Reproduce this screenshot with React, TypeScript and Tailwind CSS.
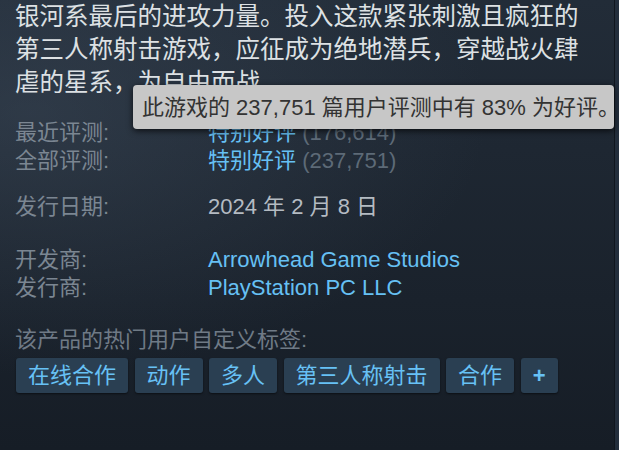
import React from "react";

const font = { fontFamily: '"Liberation Sans", "Noto Sans CJK SC", sans-serif' };

const tags = ["在线合作", "动作", "多人", "第三人称射击", "合作"];

function InfoRow({ label, children }: { label: string; children: React.ReactNode }) {
  return (
    <div className="flex leading-[28px]">
      <div className="w-[193px] shrink-0 text-[#7b8692]">{label}</div>
      <div>{children}</div>
    </div>
  );
}

export default function App() {
  return (
    <div
      className="relative flex h-[450px] w-[619px] overflow-hidden bg-[radial-gradient(ellipse_at_5%_25%,rgba(75,90,108,0.35),transparent_55%),linear-gradient(to_bottom,#222c38,#161d26)]"
      style={font}
    >
      <div className="flex-1 pl-[15px]">
        {/* Description */}
        <p className="w-[572px] text-[24.5px] leading-[33px] text-[#dde1e4]">
          银河系最后的进攻力量。投入这款紧张刺激且疯狂的第三人称射击游戏，应征成为绝地潜兵，穿越战火肆虐的星系，为自由而战。
        </p>

        <div className="mt-[20px] text-[22px]">
          <InfoRow label="最近评测:">
            <span className="text-[#66c0f4]">特别好评</span>
            <span className="text-[#5d6a77]"> (176,614)</span>
          </InfoRow>
          <InfoRow label="全部评测:">
            <span className="text-[#66c0f4]">特别好评</span>
            <span className="text-[#5d6a77]"> (237,751)</span>
          </InfoRow>

          <div className="mt-[18px]">
            <InfoRow label="发行日期:">
              <span className="text-[#b4bbc2]">2024 年 2 月 8 日</span>
            </InfoRow>
          </div>

          <div className="mt-[25px]">
            <InfoRow label="开发商:">
              <span className="text-[#66c0f4]">Arrowhead Game Studios</span>
            </InfoRow>
            <InfoRow label="发行商:">
              <span className="text-[#66c0f4]">PlayStation PC LLC</span>
            </InfoRow>
          </div>

          <div className="mt-[24px] leading-[28px] text-[#6f7a86]">该产品的热门用户自定义标签:</div>

          {/* Tags */}
          <div className="ml-px mt-[4px] flex gap-[6.5px]">
            {tags.map((t) => (
              <div
                key={t}
                className="flex h-[35px] items-center rounded-[3px] bg-[#2a3f52] px-[12px] text-[22px] text-[#67c1f5] shadow-[0_1px_2px_rgba(0,0,0,0.5)]"
              >
                {t}
              </div>
            ))}
            <div className="flex h-[35px] w-[37px] items-center justify-center rounded-[3px] bg-[#2a3f52] text-[22px] font-bold text-[#67c1f5] shadow-[0_1px_2px_rgba(0,0,0,0.5)]">
              +
            </div>
          </div>
        </div>
      </div>

      {/* Right edge strip */}
      <div className="w-[5px] shrink-0 border-l border-[#10161e] bg-[#232e3c]" />

      {/* Tooltip */}
      <div className="absolute left-[133px] top-[85px] flex h-[44px] w-[481px] items-center whitespace-nowrap rounded-[4px] bg-[#c7c7c7] pl-[9px] text-[22px] text-[#333333] shadow-[0_2px_6px_rgba(0,0,0,0.7)]">
        此游戏的 237,751 篇用户评测中有 83% 为好评。
      </div>
    </div>
  );
}
